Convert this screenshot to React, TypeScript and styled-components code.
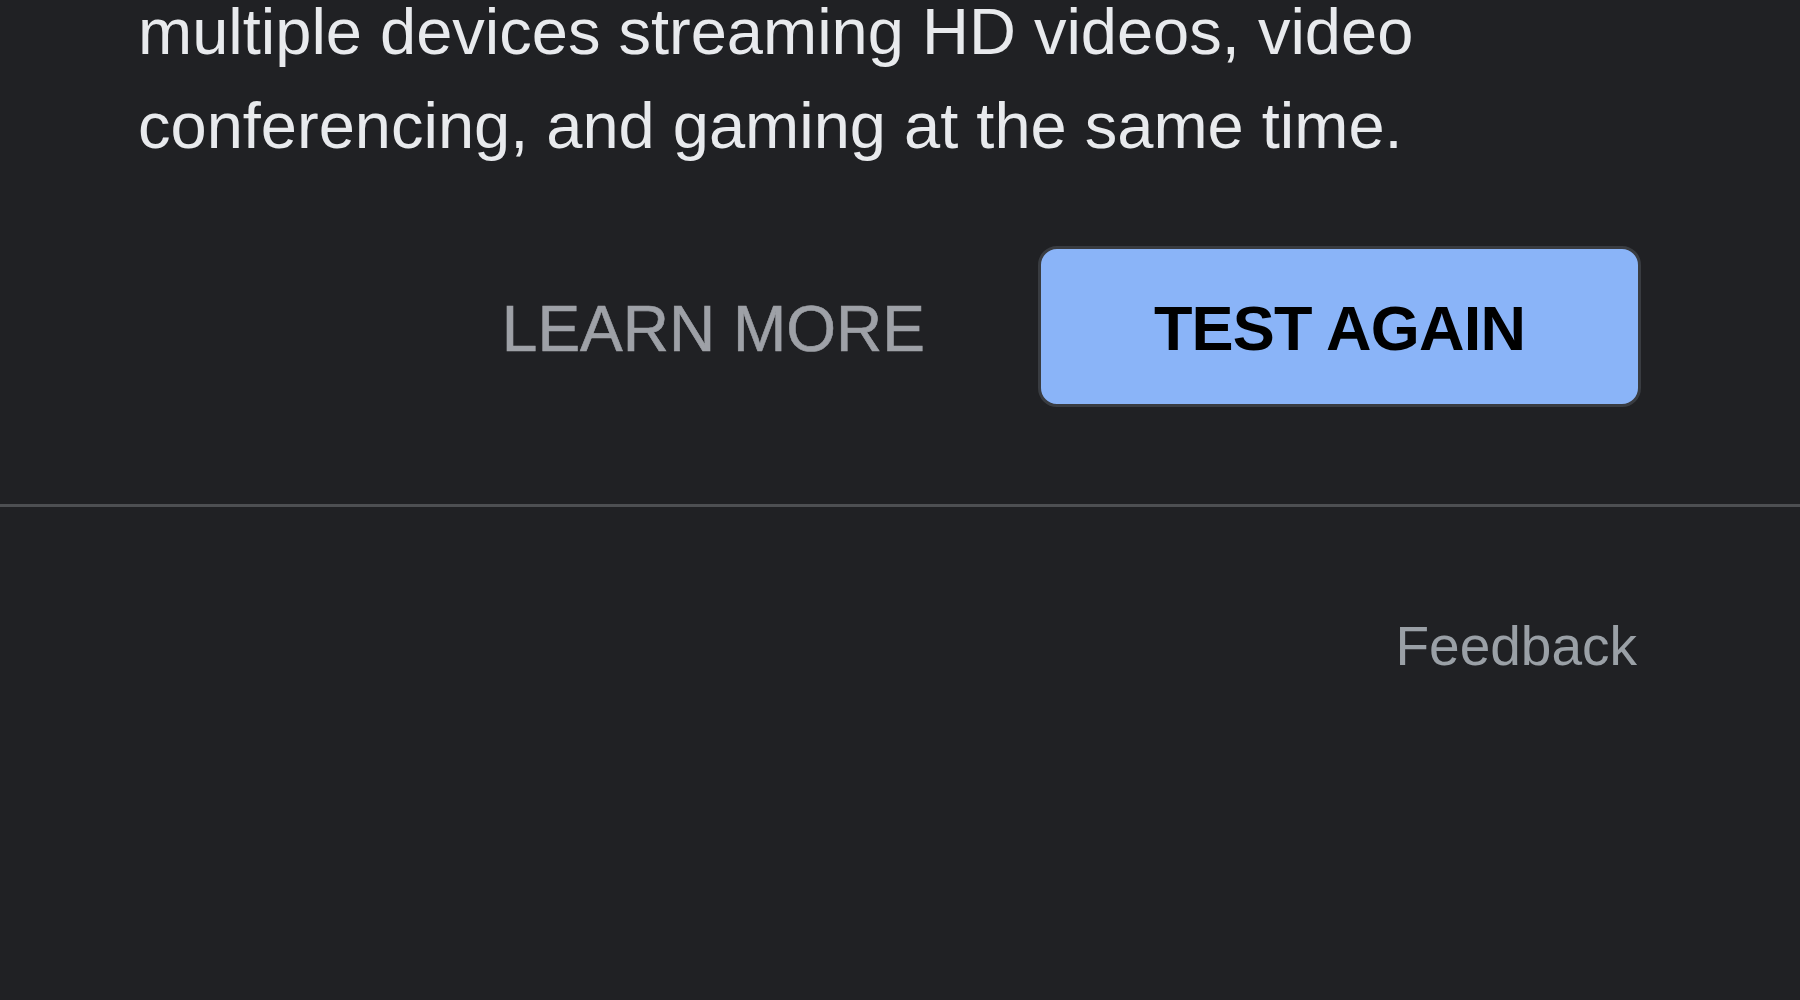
import React from "react";
import styled, { createGlobalStyle } from "styled-components";

const Global = createGlobalStyle`
  html, body {
    margin: 0;
    padding: 0;
    background: #202124;
    height: 100%;
    overflow: hidden;
  }
  #root {
    min-height: 100vh;
    background: #202124;
  }
  * { box-sizing: border-box; }
`;

const Page = styled.div`
  display: flex;
  flex-direction: column;
  min-height: 100vh;
  background: #202124;
  font-family: "Liberation Sans", Arial, Helvetica, sans-serif;
`;

const Content = styled.section`
  display: flex;
  flex-direction: column;
  padding: 0 159px 0 138px;
`;

const Description = styled.p`
  margin: -15px 0 0 0;
  font-size: 65px;
  line-height: 94px;
  color: #e8eaed;
  max-width: 1500px;
`;

const Actions = styled.div`
  display: flex;
  justify-content: flex-end;
  align-items: center;
  gap: 113px;
  margin-top: 73px;
`;

const TextButton = styled.button`
  background: none;
  border: none;
  padding: 4px 0 0 0;
  font-family: inherit;
  font-size: 64px;
  font-weight: 400;
  color: #9ea1a7;
  cursor: pointer;
  line-height: 1;
  -webkit-text-stroke: 0.6px #9ea1a7;
`;

const FilledButton = styled.button`
  width: 603px;
  height: 161px;
  background: #8ab4f8;
  border: 3px solid #393c41;
  border-radius: 19px;
  font-family: inherit;
  font-size: 63px;
  font-weight: 700;
  letter-spacing: -0.8px;
  color: #000000;
  cursor: pointer;
  display: flex;
  align-items: center;
  justify-content: center;
  line-height: 1;
  padding: 4px 0 0 0;
`;

const Divider = styled.hr`
  margin: 97px 0 0 0;
  border: none;
  height: 3px;
  background: #4d4f52;
  width: 100%;
`;

const Footer = styled.footer`
  display: flex;
  justify-content: flex-end;
  padding: 107px 163px 0 0;
`;

const FooterLink = styled.a`
  font-family: "Liberation Sans", Arial, Helvetica, sans-serif;
  font-size: 55px;
  line-height: 64px;
  color: #9aa0a6;
  text-decoration: none;
  cursor: pointer;
`;

export default function App() {
  return (
    <>
      <Global />
      <Page>
        <Content>
          <Description>
            multiple devices streaming HD videos, video conferencing, and gaming at the same time.
          </Description>
          <Actions>
            <TextButton>LEARN MORE</TextButton>
            <FilledButton>TEST AGAIN</FilledButton>
          </Actions>
        </Content>
        <Divider />
        <Footer>
          <FooterLink>Feedback</FooterLink>
        </Footer>
      </Page>
    </>
  );
}
